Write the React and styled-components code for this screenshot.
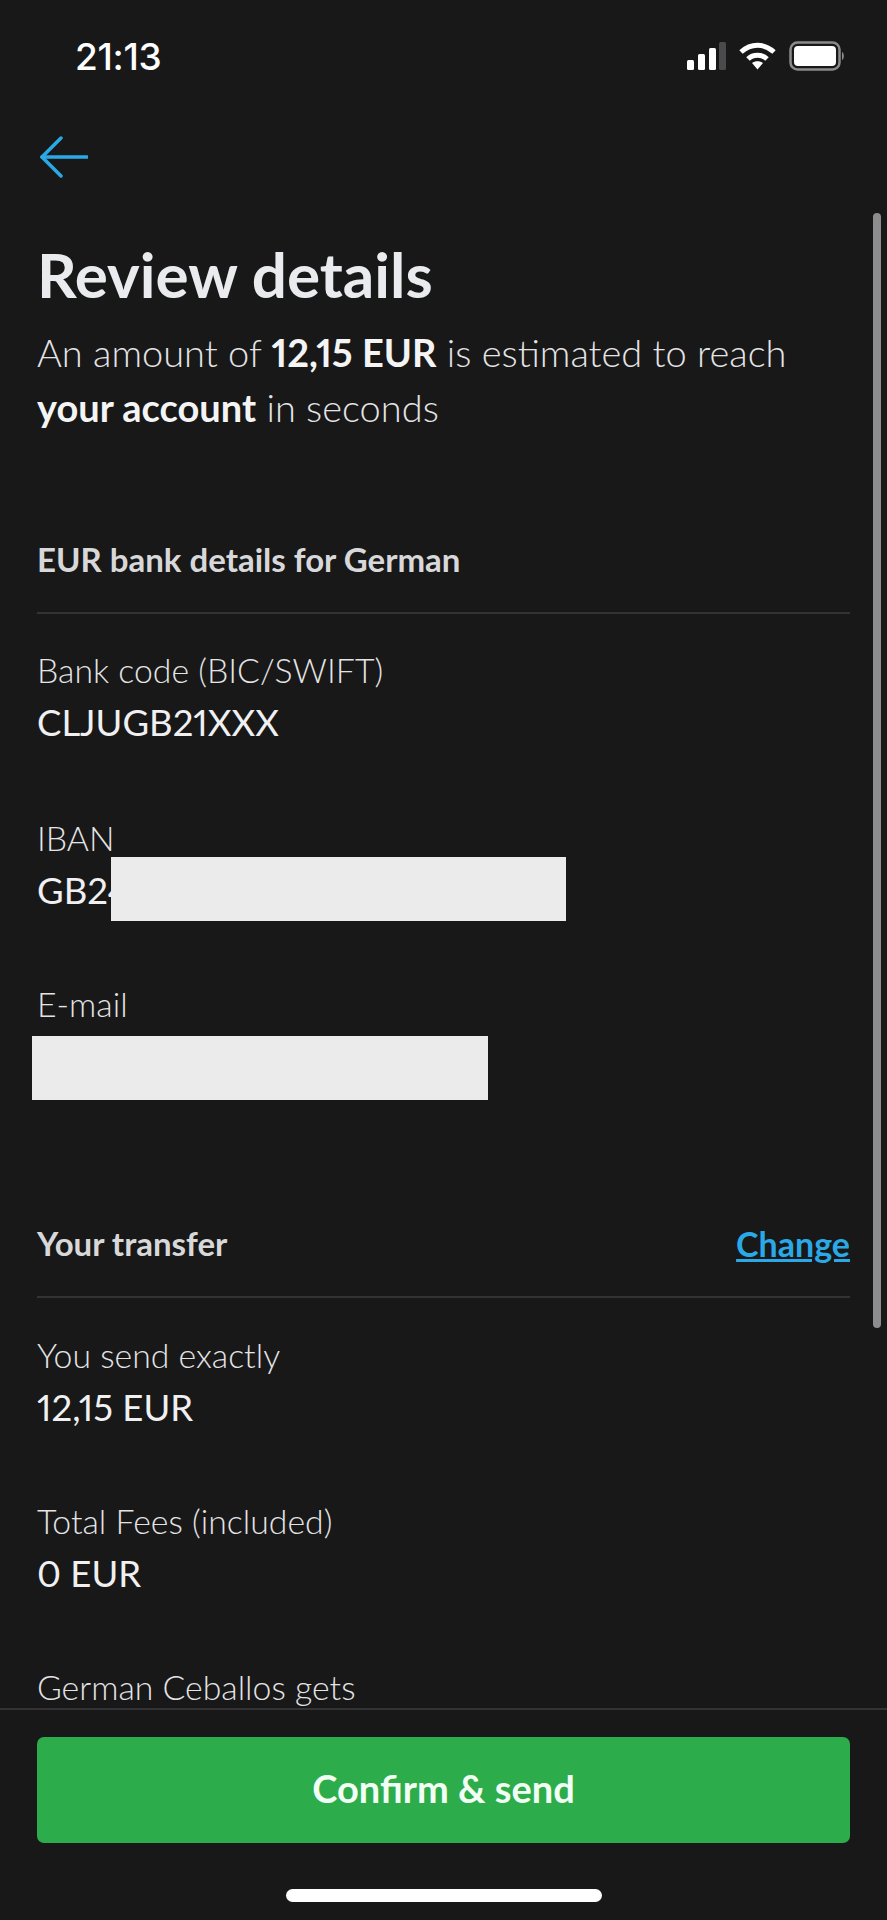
import React from "react";
import styled, { createGlobalStyle } from "styled-components";

const Global = createGlobalStyle`
  html, body { margin: 0; padding: 0; background: #181818; }
  * { box-sizing: border-box; }
`;

const Screen = styled.div`
  width: 887px;
  height: 1920px;
  display: flex;
  flex-direction: column;
  overflow: hidden;
  background: #181818;
  color: #e8e8ea;
  font-family: Lato, "Noto Sans", sans-serif;
  font-variant-numeric: proportional-nums;
`;

const StatusBar = styled.div`
  height: 112px;
  flex: none;
  display: flex;
  align-items: center;
  justify-content: space-between;
  padding: 0 42px 0 75px;
`;

const Clock = styled.span`
  font-family: Inter, "Liberation Sans", sans-serif;
  font-size: 37px;
  font-weight: 500;
  color: #fff;
  letter-spacing: -0.3px;
`;

const StatusIcons = styled.div`
  display: flex;
  align-items: center;
  gap: 12px;
`;

const Nav = styled.div`
  height: 90px;
  flex: none;
  padding: 0 0 0 40px;
  display: flex;
  align-items: center;
`;

const Scroll = styled.div`
  flex: 1;
  min-height: 0;
  position: relative;
  overflow: hidden;
  padding: 38px 37px 0;
`;

const ScrollThumb = styled.div`
  position: absolute;
  top: 11px;
  right: 6px;
  width: 8px;
  height: 1115px;
  border-radius: 4px;
  background: #8d8d8f;
`;

const Title = styled.h1`
  margin: 0;
  font-size: 62px;
  line-height: 68px;
  font-weight: 700;
  color: #eaebee;
`;

const Lead = styled.p`
  margin: 17px 0 0;
  font-size: 38px;
  line-height: 55px;
  font-weight: 300;
  color: #e4e4e6;
  strong { font-weight: 700; color: #f4f4f5; }
`;

const SectionHead = styled.div`
  display: flex;
  justify-content: space-between;
  align-items: center;
  height: 52px;
  margin-top: ${(p) => p.$top}px;
  font-size: 33px;
  font-weight: 700;
  color: #d8d8da;
`;

const Rule = styled.div`
  height: 2px;
  margin-top: 27px;
  background: #333335;
`;

const Change = styled.a`
  color: #2aa9e6;
  text-decoration: underline;
  font-size: 34px;
  font-weight: 700;
`;

const Field = styled.div`
  margin-top: ${(p) => p.$top}px;
`;

const Label = styled.div`
  font-size: 33.8px;
  line-height: 50px;
  font-weight: 300;
  color: #e4e4e6;
`;

const Value = styled.div`
  position: relative;
  font-size: 36.5px;
  line-height: 54px;
  font-weight: 400;
  color: #f0f0f2;
`;

const Redaction = styled.div`
  position: absolute;
  top: ${(p) => p.$top}px;
  left: ${(p) => p.$left}px;
  width: ${(p) => p.$width}px;
  height: 64px;
  background: #ebebeb;
`;

const EmailValue = styled.div`
  position: relative;
  height: 54px;
`;

const Footer = styled.div`
  flex: none;
  height: 212px;
  border-top: 2px solid #333335;
  padding: 27px 37px 0;
  display: flex;
  flex-direction: column;
  align-items: center;
`;

const ConfirmButton = styled.button`
  width: 100%;
  height: 106px;
  border: 0;
  border-radius: 7px;
  padding: 0 0 4px;
  background: #2dac4c;
  color: #f2fff5;
  font-family: inherit;
  font-size: 38px;
  font-weight: 700;
`;

const HomeBar = styled.div`
  width: 316px;
  height: 13px;
  margin-top: 46px;
  border-radius: 7px;
  background: #fff;
`;

const Signal = () => (
  <svg width="39" height="29" viewBox="0 0 39 29">
    <rect x="0" y="18" width="7" height="10" rx="1.5" fill="#fff" />
    <rect x="11" y="12" width="7" height="16" rx="1.5" fill="#fff" />
    <rect x="22" y="6" width="7" height="22" rx="1.5" fill="#fff" />
    <rect x="32" y="0" width="7" height="28" rx="1.5" fill="#4a4a4c" />
  </svg>
);

const Wifi = () => (
  <svg width="39" height="29" viewBox="0 0 39 29" fill="none" stroke="#fff" strokeWidth="5">
    <path d="M3 10 C13 1 26 1 36 10" />
    <path d="M10 17 C15 12 24 12 29 17" />
    <path d="M14 21 L19.5 27.5 L25 21 C22 18.5 17 18.5 14 21Z" fill="#fff" stroke="none" />
  </svg>
);

const Battery = () => (
  <svg width="56" height="30" viewBox="0 0 56 30">
    <rect x="1.5" y="1.5" width="49" height="27" rx="7" fill="none" stroke="#8a8a8c" strokeWidth="2.5" />
    <rect x="5" y="5" width="42" height="20" rx="4" fill="#fff" />
    <path d="M53 11 C55.5 12 55.5 18 53 19Z" fill="#8a8a8c" />
  </svg>
);

const BackArrow = () => (
  <svg width="48" height="42" viewBox="0 0 48 42" fill="none" stroke="#2aa9e6" strokeWidth="3.5" strokeLinecap="round" strokeLinejoin="miter">
    <path d="M47 21 H2" />
    <path d="M21 2 L2 21 L21 40" />
  </svg>
);

export default function App() {
  return (
    <Screen>
      <Global />
      <StatusBar>
        <Clock>21:13</Clock>
        <StatusIcons>
          <Signal />
          <Wifi />
          <Battery />
        </StatusIcons>
      </StatusBar>
      <Nav>
        <BackArrow />
      </Nav>
      <Scroll>
        <ScrollThumb />
        <Title>Review details</Title>
        <Lead>
          An amount of <strong>12,15 EUR</strong> is estimated to reach
          <br />
          <strong>your account</strong> in seconds
        </Lead>
        <SectionHead $top={98}>EUR bank details for German</SectionHead>
        <Rule />
        <Field $top={31}>
          <Label>Bank code (BIC/SWIFT)</Label>
          <Value>CLJUGB21XXX</Value>
        </Field>
        <Field $top={64}>
          <Label>IBAN</Label>
          <Value>
            GB24
            <Redaction $top={-6} $left={74} $width={455} />
          </Value>
        </Field>
        <Field $top={62}>
          <Label>E-mail</Label>
          <EmailValue>
            <Redaction $top={7} $left={-5} $width={456} />
          </EmailValue>
        </Field>
        <SectionHead $top={134}>
          Your transfer
          <Change>Change</Change>
        </SectionHead>
        <Rule />
        <Field $top={32}>
          <Label>You send exactly</Label>
          <Value>12,15 EUR</Value>
        </Field>
        <Field $top={62}>
          <Label>Total Fees (included)</Label>
          <Value>0 EUR</Value>
        </Field>
        <Field $top={62}>
          <Label>German Ceballos gets</Label>
        </Field>
      </Scroll>
      <Footer>
        <ConfirmButton>Confirm &amp; send</ConfirmButton>
        <HomeBar />
      </Footer>
    </Screen>
  );
}
